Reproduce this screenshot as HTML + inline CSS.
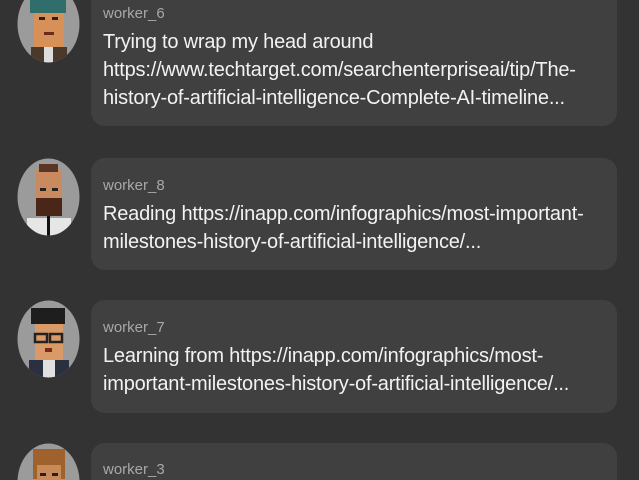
<!DOCTYPE html>
<html><head><meta charset="utf-8"><style>
html,body{margin:0;padding:0;width:639px;height:480px;overflow:hidden;}
body{background:#333333;position:relative;font-family:"Liberation Sans",Arial,sans-serif;}
.av{position:absolute;left:17px;width:63px;height:78px;border-radius:50%;overflow:hidden;}
.b{position:absolute;left:91px;width:526px;background:#404040;border-radius:14px;box-sizing:border-box;padding:0 12px;}
.n{color:#a8a8a8;font-size:15px;line-height:20px;margin-bottom:4px;}
.m{color:#f2f2f2;font-size:20px;line-height:28px;letter-spacing:-0.2px;}
</style></head><body>

<svg class="av" style="top:-15px" viewBox="0 0 63 78"><defs><clipPath id="c"><ellipse cx="31.5" cy="39" rx="31" ry="38.5"/></clipPath></defs><g clip-path="url(#c)"><rect width="63" height="78" fill="#9b9b9b"/>
<rect x="14" y="62" width="36" height="16" fill="#4a3a2c"/><rect x="27" y="62" width="9" height="16" fill="#ddd"/>
<rect x="17" y="20" width="30" height="42" fill="#d69058"/><rect x="13" y="8" width="36" height="20" fill="#2f6e6a"/>
<rect x="22" y="32" width="6" height="3" fill="#222"/><rect x="35" y="32" width="6" height="3" fill="#222"/>
<rect x="27" y="47" width="10" height="3" fill="#6b2a1a"/></g></svg>
<div class="b" style="top:-15px;height:141px;padding-top:19px"><div class="n">worker_6</div><div class="m">Trying to wrap my head around<br>https://www.techtarget.com/searchenterpriseai/tip/The-<br>history-of-artificial-intelligence-Complete-AI-timeline...</div></div>

<svg class="av" style="top:158px" viewBox="0 0 63 78"><g clip-path="url(#c)"><rect width="63" height="78" fill="#9b9b9b"/>
<rect x="10" y="60" width="44" height="18" fill="#e6e6e6"/><rect x="30" y="58" width="3" height="20" fill="#111"/>
<rect x="19" y="12" width="26" height="46" fill="#c98a60"/><rect x="22" y="6" width="19" height="8" fill="#5a3424"/>
<rect x="19" y="40" width="26" height="18" fill="#4a2618"/>
<rect x="23" y="30" width="6" height="3" fill="#222"/><rect x="35" y="30" width="6" height="3" fill="#222"/></g></svg>
<div class="b" style="top:158px;height:112px;padding-top:18px"><div class="n">worker_8</div><div class="m">Reading https://inapp.com/infographics/most-important-<br>milestones-history-of-artificial-intelligence/...</div></div>

<svg class="av" style="top:300px" viewBox="0 0 63 78"><g clip-path="url(#c)"><rect width="63" height="78" fill="#9b9b9b"/>
<rect x="12" y="60" width="40" height="18" fill="#2a3040"/><rect x="26" y="60" width="12" height="18" fill="#e0e0e0"/>
<rect x="18" y="18" width="28" height="42" fill="#d99a68"/><rect x="14" y="8" width="34" height="16" fill="#1e1e1e"/>
<rect x="18" y="34" width="12" height="8" fill="none" stroke="#222" stroke-width="2.5"/><rect x="33" y="34" width="12" height="8" fill="none" stroke="#222" stroke-width="2.5"/>
<rect x="28" y="48" width="7" height="4" fill="#7a2a1a"/></g></svg>
<div class="b" style="top:300px;height:113px;padding-top:18px"><div class="n">worker_7</div><div class="m">Learning from https://inapp.com/infographics/most-<br>important-milestones-history-of-artificial-intelligence/...</div></div>

<div style="position:absolute;left:17px;top:443px;width:63px;height:37px;overflow:hidden">
<svg style="position:absolute;left:0;top:0;width:63px;height:78px" viewBox="0 0 63 78"><g clip-path="url(#c)"><rect width="63" height="78" fill="#9b9b9b"/>
<rect x="16" y="6" width="32" height="30" fill="#a0622c"/><rect x="20" y="22" width="24" height="30" fill="#c98a5a"/>
<rect x="23" y="30" width="6" height="3" fill="#222"/><rect x="35" y="30" width="6" height="3" fill="#222"/></g></svg></div>
<div class="b" style="top:443px;height:37px;border-radius:14px 14px 0 0;padding-top:17px;overflow:hidden"><div class="n" style="margin:0">worker_3</div></div>

</body></html>
